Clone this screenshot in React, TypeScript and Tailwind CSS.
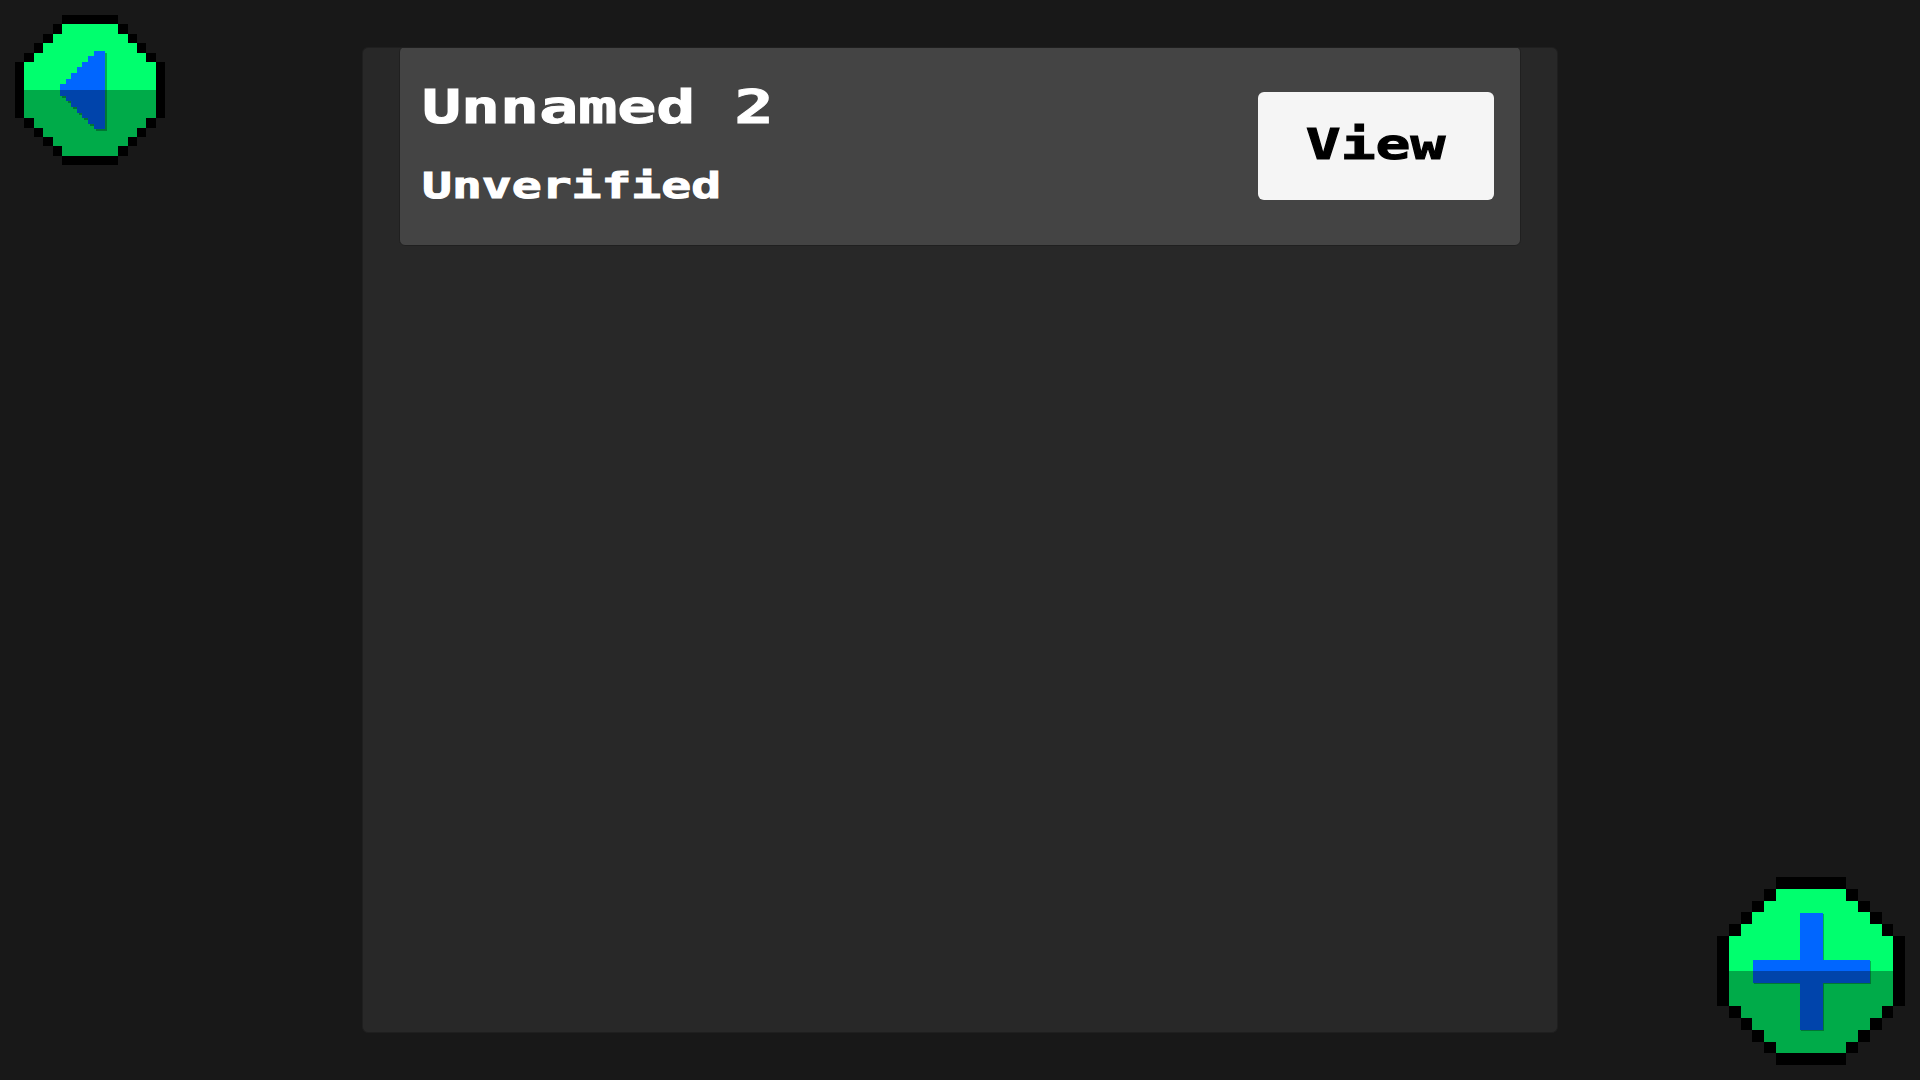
const OCTAGON_OUTLINE = "M5 0h6v1h1v1h1v1h1v1h1v1h1v6h-1v1h-1v1h-1v1h-1v1h-1v1H5v-1H4v-1H3v-1H2v-1H1v-1H0V5h1V4h1V3h1V2h1V1h1z";
const OCTAGON_FILL = "M5 1h6v1h1v1h1v1h1v1h1v6h-1v1h-1v1h-1v1h-1v1H5v-1H4v-1H3v-1H2v-1H1V5h1V4h1V3h1V2h1z";

const ARROW = [
  [45, 69, 6, 12],
  [51, 64, 5, 22],
  [56, 58, 6, 34],
  [62, 52, 5, 46],
  [67, 47, 6, 56],
  [73, 41, 6, 68],
  [79, 36, 11, 78],
];

function Arrow({ fill, opacity = 1, dx = 0, dy = 0 }: { fill: string; opacity?: number; dx?: number; dy?: number }) {
  return (
    <g fill={fill} fillOpacity={opacity} transform={`translate(${dx} ${dy})`}>
      {ARROW.map(([x, y, w, h]) => (
        <rect key={x} x={x} y={y} width={w} height={h} />
      ))}
    </g>
  );
}

function Plus({ fill, opacity = 1, dx = 0, dy = 0 }: { fill: string; opacity?: number; dx?: number; dy?: number }) {
  return (
    <g fill={fill} fillOpacity={opacity} transform={`translate(${dx} ${dy})`}>
      <path d="M83 36h23v47h47v23h-47v47H83v-47H36V83h47z" />
    </g>
  );
}

function PixelButton({
  size,
  label,
  className,
  children,
}: {
  size: number;
  label: string;
  className: string;
  children: React.ReactNode;
}) {
  return (
    <button aria-label={label} className={className}>
      <svg width={size} height={size} viewBox={`0 0 ${size} ${size}`} shapeRendering="crispEdges" className="block">
        <g transform={`scale(${size / 16})`}>
          <path d={OCTAGON_OUTLINE} fill="#000000" />
          <path d={OCTAGON_FILL} fill="#00ff6e" />
        </g>
        {children}
        <g transform={`scale(${size / 16})`}>
          <path d="M1 8h14v3h-1v1h-1v1h-1v1h-1v1H5v-1H4v-1H3v-1H2v-1H1z" fill="#000000" fillOpacity="0.33" />
        </g>
      </svg>
    </button>
  );
}

export default function App() {
  const pixelFont = "font-['DejaVu_Sans_Mono'] font-bold";
  return (
    <div className="relative flex h-screen w-full items-center justify-center overflow-hidden bg-[#181818]">
      <PixelButton size={150} label="Back" className="absolute left-[15px] top-[15px]">
        <Arrow fill="#000000" opacity={0.3} dx={2} dy={2} />
        <Arrow fill="#0066ff" />
      </PixelButton>

      <main className="h-[986px] w-[1196px] overflow-hidden rounded-md border border-[#1f1f1f] bg-[#282828] px-[36px]">
        <section className="-mt-[2px] flex h-[200px] items-center justify-between rounded-md border border-[#202020] bg-[#444444] pl-[22px] pr-[26px]">
          <div className="flex flex-col pb-[6px]">
            <h2 className={`${pixelFont} origin-left scale-x-[1.38] text-[47px] leading-[56px] text-white [-webkit-text-stroke:1px_white]`}>Unnamed 2</h2>
            <p className={`${pixelFont} mt-[30px] origin-left scale-x-[1.38] text-[36px] leading-[42px] text-white [-webkit-text-stroke:1px_white]`}>Unverified</p>
          </div>
          <button className="flex h-[108px] w-[236px] items-center justify-center rounded-md bg-[#f5f5f5] pb-[2px]">
            <span className={`${pixelFont} scale-x-[1.38] text-[42px] leading-none text-black [-webkit-text-stroke:1px_black]`}>View</span>
          </button>
        </section>
      </main>

      <PixelButton size={188} label="Add" className="absolute bottom-[15px] right-[15px]">
        <Plus fill="#000000" opacity={0.3} dx={1} dy={1} />
        <Plus fill="#0066ff" />
      </PixelButton>
    </div>
  );
}
